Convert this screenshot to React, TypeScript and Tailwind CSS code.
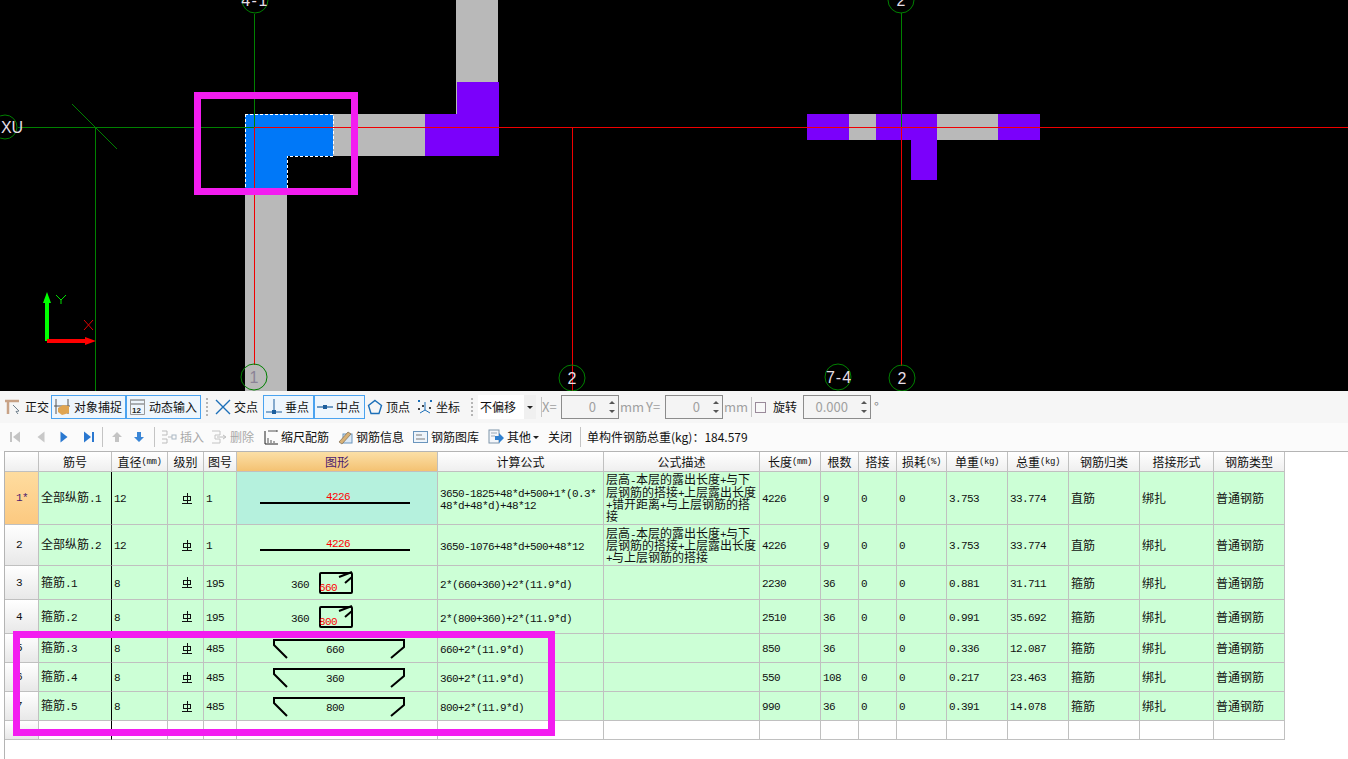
import React from 'react';

const FONT = "font-['Noto_Sans_CJK_SC','Liberation_Sans',sans-serif]";

// CJK runs stay at 12px, the latin runs use a narrow mono to get the 6px cell of the original font
const Mix = ({ text }: { text: string }) => (
  <>
    {text.split(/([\u4e00-\u9fa5]+)/).map((part, i) =>
      /[\u4e00-\u9fa5]/.test(part) ? (
        <span key={i}>{part}</span>
      ) : (
        <span key={i} className="font-['Liberation_Mono',monospace] text-[11px] tracking-[-0.6px]">
          {part}
        </span>
      )
    )}
  </>
);

const HeadUnit = ({ label, unit }: { label: string; unit: string }) => (
  <>
    {label}
    <span className="font-['Liberation_Mono',monospace] text-[9px] tracking-[-0.4px]">({unit})</span>
  </>
);

/* ---------- CAD canvas ---------- */

const Bubble = ({
  x,
  y,
  r = 13,
  label,
  dx = 0,
  fill = '#e6dfe6',
  spacing = 0,
}: {
  x: number;
  y: number;
  r?: number;
  label: string;
  dx?: number;
  fill?: string;
  spacing?: number;
}) => (
  <g>
    <circle cx={x} cy={y} r={r} fill="none" stroke="#008000" strokeWidth="1" />
    <text
      x={x + dx}
      y={y + 6}
      textAnchor="middle"
      fontSize="16"
      letterSpacing={spacing}
      fontFamily="Liberation Sans, sans-serif"
      fill={fill}
    >
      {label}
    </text>
  </g>
);

const Canvas = () => (
  <svg width="1348" height="391" viewBox="0 0 1348 391" className="block bg-black">
    {/* walls */}
    <g fill="#b9b9b9" shapeRendering="crispEdges">
      <rect x="245" y="190" width="42" height="201" />
      <rect x="333" y="114" width="92" height="42" />
      <rect x="456" y="0" width="42" height="114" />
      <rect x="849" y="114" width="27" height="26" />
      <rect x="937" y="114" width="61" height="26" />
    </g>
    <g fill="#7b00fb" shapeRendering="crispEdges">
      <rect x="425" y="114" width="74" height="42" />
      <rect x="457" y="82" width="42" height="32" />
      <rect x="807" y="114" width="42" height="26" />
      <rect x="876" y="114" width="61" height="26" />
      <rect x="911" y="140" width="26" height="40" />
      <rect x="998" y="114" width="42" height="26" />
    </g>
    {/* selected column */}
    <path
      d="M245 114H333V156H287V190H245Z"
      fill="#0078f8"
      stroke="#fff"
      strokeWidth="1"
      strokeDasharray="3 2"
      shapeRendering="crispEdges"
    />
    {/* axis lines */}
    <g strokeWidth="1" shapeRendering="crispEdges">
      <path d="M17.5 127.5H254" stroke="#008000" />
      <path d="M254 127.5H1348" stroke="#f00000" />
      <path d="M254.5 14V127" stroke="#008000" />
      <path d="M254.5 127V365" stroke="#f00000" />
      <path d="M95.5 127V391" stroke="#008000" />
      <path d="M572.5 127V391" stroke="#f00000" />
      <path d="M901.5 13V127" stroke="#008000" />
      <path d="M901.5 127V366" stroke="#f00000" />
    </g>
    <path d="M72 104L117 149" stroke="#008000" strokeWidth="1" />
    {/* grid bubbles */}
    <Bubble x={5} y={127} r={12} label="XU" dx={7} />
    <Bubble x={255} y={0} label="4-1" spacing={1.5} />
    <Bubble x={901} y={0} label="2" />
    <Bubble x={254} y={377} label="1" fill="#8a8296" />
    <Bubble x={572} y={378} label="2" />
    <Bubble x={838} y={377} label="7-4" dx={1} spacing={1} />
    <Bubble x={902} y={378} label="2" />
    {/* ucs */}
    <path d="M47 341V300" stroke="#00ff00" strokeWidth="4" />
    <path d="M47 292L51 303H43Z" fill="#00ff00" />
    <path d="M47 341H88" stroke="#ff0000" strokeWidth="4" />
    <path d="M96 341L85 337V345Z" fill="#ff0000" />
    <path d="M56 295L61 300L66 295M61 300V304" fill="none" stroke="#00e000" strokeWidth="1" />
    <path d="M84 320L93 330M93 320L84 330" fill="none" stroke="#e00000" strokeWidth="1" />
  </svg>
);

/* ---------- toolbar icons ---------- */

const Ico = ({ w = 16, h = 16, children }: { w?: number; h?: number; children: React.ReactNode }) => (
  <svg width={w} height={h} viewBox={`0 0 ${w} ${h}`} className="shrink-0" fill="none">
    {children}
  </svg>
);

const OrthoIcon = () => (
  <Ico w={17}>
    <path d="M0 2H14M3 2V15" stroke="#c8a286" strokeWidth="2.5" />
    <path d="M8 6L14 12L11 12.5L13 15" stroke="#6f7f8c" strokeWidth="1" />
  </Ico>
);
const SnapIcon = () => (
  <Ico w={17}>
    <path d="M2 0V15M14 0V15M0 7H16" stroke="#555" strokeWidth="1" />
    <path d="M4 9L9 6L15 7V14L8 16L4 13Z" fill="#dfa552" />
  </Ico>
);
const InputIcon = () => (
  <Ico w={17}>
    <path d="M1 1H16M1 5H16" stroke="#666" strokeWidth="1" />
    <path d="M1.5 1V15.5H15.5V1" stroke="#9a9a9a" strokeWidth="1" />
    <text x="3" y="14" fontSize="8" fontFamily="Liberation Sans, sans-serif" fontWeight="bold" fill="#222">
      12
    </text>
  </Ico>
);
const CrossIcon = () => (
  <Ico>
    <path d="M1 1L15 15M15 1L1 15" stroke="#1c6fb8" strokeWidth="1.4" />
  </Ico>
);
const PerpIcon = () => (
  <Ico>
    <path d="M8 0V13M0 13H16" stroke="#1c5f9e" strokeWidth="1" />
    <rect x="6" y="11" width="4" height="4" fill="#1c5f9e" />
  </Ico>
);
const MidIcon = () => (
  <Ico>
    <path d="M0 8H16" stroke="#1c5f9e" strokeWidth="1.2" />
    <rect x="6" y="6" width="4" height="4" fill="#1c5f9e" />
  </Ico>
);
const VertexIcon = () => (
  <Ico>
    <path d="M8 1.5L14.5 6.5L12 14.5H4L1.5 6.5Z" stroke="#1c6fb8" strokeWidth="1.4" />
  </Ico>
);
const CoordIcon = () => (
  <Ico>
    <path d="M8 3V11M3 14L8 11L13 14" stroke="#1c6fb8" strokeWidth="1" />
    <rect x="1" y="1" width="2" height="2" fill="#1c6fb8" />
    <rect x="13" y="1" width="2" height="2" fill="#1c6fb8" />
    <rect x="5" y="6" width="2" height="2" fill="#444" />
    <rect x="12" y="8" width="2" height="2" fill="#444" />
    <rect x="1" y="9" width="2" height="2" fill="#444" />
  </Ico>
);

const NavFirst = ({ color }: { color: string }) => (
  <Ico w={11} h={12}>
    <rect x="0" y="1" width="2" height="10" fill={color} />
    <path d="M10 0.5V11.5L3 6Z" fill={color} />
  </Ico>
);
const NavPrev = ({ color }: { color: string }) => (
  <Ico w={8} h={12}>
    <path d="M7.5 0.5V11.5L0.5 6Z" fill={color} />
  </Ico>
);
const NavNext = ({ color }: { color: string }) => (
  <Ico w={8} h={12}>
    <path d="M0.5 0.5V11.5L7.5 6Z" fill={color} />
  </Ico>
);
const NavLast = ({ color }: { color: string }) => (
  <Ico w={11} h={12}>
    <path d="M0 0.5V11.5L7 6Z" fill={color} />
    <rect x="8" y="1" width="2" height="10" fill={color} />
  </Ico>
);
const MoveUp = ({ color }: { color: string }) => (
  <Ico w={10} h={10}>
    <path d="M5 0L10 5H7V10H3V5H0Z" fill={color} />
  </Ico>
);
const MoveDown = ({ color }: { color: string }) => (
  <Ico w={10} h={10}>
    <path d="M3 0H7V5H10L5 10L0 5H3Z" fill={color} />
  </Ico>
);
const RowInsert = () => (
  <Ico>
    <path d="M1 2H6V6H1M1 10H6V14H1" stroke="#bdbdbd" strokeWidth="1" />
    <path d="M7 8H11" stroke="#bdbdbd" strokeWidth="1" />
    <rect x="11" y="6" width="4" height="4" stroke="#a9b7c4" strokeWidth="1" />
  </Ico>
);
const RowDelete = () => (
  <Ico>
    <path d="M1 2H9V6H4V10H9V14H1" stroke="#c4c4c4" strokeWidth="1" />
    <path d="M6 8H14M12 6L15 8L12 10" stroke="#bdbdbd" strokeWidth="1" />
  </Ico>
);
const ScaleIcon = () => (
  <Ico w={14}>
    <path d="M1 2V15H14" stroke="#222" strokeWidth="1" />
    <path d="M4 2H13M4 9V14M7 11V14M10 12V14M13 1V3" stroke="#555" strokeWidth="1" />
  </Ico>
);
const InfoIcon = () => (
  <Ico w={15}>
    <rect x="5" y="5" width="9" height="9" fill="#dbe9f6" stroke="#6a95bd" strokeWidth="1" />
    <path d="M1 13L10 3L13 5L4 15Z" fill="#d9b277" stroke="#7b6a50" strokeWidth="0.7" />
  </Ico>
);
const LibraryIcon = () => (
  <Ico w={15}>
    <rect x="0.5" y="2.5" width="14" height="11" fill="#eef4fa" stroke="#6a95bd" strokeWidth="1" />
    <path d="M3 6H9M3 10H12" stroke="#7a7a7a" strokeWidth="1.2" />
  </Ico>
);
const OtherIcon = () => (
  <Ico>
    <rect x="1" y="1" width="10" height="13" fill="#f3f6fa" stroke="#7f95aa" strokeWidth="1" />
    <path d="M3 4H9M3 7H7" stroke="#9aa8b5" strokeWidth="1" />
    <path d="M7 7H11V4L16 9L11 14V11H7Z" fill="#2f80d0" />
  </Ico>
);

/* ---------- toolbars ---------- */

const Tool = ({
  w,
  icon,
  label,
  active,
  muted,
}: {
  w: string;
  icon: React.ReactNode;
  label: string;
  active?: boolean;
  muted?: boolean;
}) => (
  <div
    className={`flex h-[24px] shrink-0 items-center gap-[3px] pl-[2px] ${w} ${
      active ? 'border border-[#4aa3f0] bg-[#eef6fd]' : ''
    } ${muted ? 'text-[#a8a8a8]' : 'text-[#111]'}`}
  >
    {icon}
    <span className="whitespace-nowrap">{label}</span>
  </div>
);

const Dots = ({ className }: { className: string }) => (
  <div className={`flex shrink-0 flex-col gap-[2px] ${className}`}>
    {[0, 1, 2, 3, 4].map((i) => (
      <span key={i} className="block h-[2px] w-[2px] bg-[#b5b5b5]" />
    ))}
  </div>
);

const Sep = ({ className }: { className: string }) => (
  <div className={`h-[20px] w-px shrink-0 bg-[#c4c4c4] ${className}`} />
);

const Spin = ({ value, w }: { value: string; w: string }) => (
  <div className={`flex h-[24px] shrink-0 items-center border border-[#8c8c8c] bg-[#f4f4f4] ${w}`}>
    <span className="flex-1 pr-[9px] text-right text-[13px] text-[#a0a0a0]">{value}</span>
    <div className="flex w-[13px] flex-col items-center gap-[6px]">
      <span className="h-0 w-0 border-x-[3px] border-b-[3px] border-x-transparent border-b-[#555]" />
      <span className="h-0 w-0 border-x-[3px] border-t-[3px] border-x-transparent border-t-[#555]" />
    </div>
  </div>
);

const SnapBar = () => (
  <div className="flex h-[32px] items-center bg-[#f6f6f6] pl-[3px] text-[12px]">
    <Tool w="w-[48px]" icon={<OrthoIcon />} label="正交" />
    <Tool w="w-[75px]" icon={<SnapIcon />} label="对象捕捉" active />
    <Tool w="w-[75px]" icon={<InputIcon />} label="动态输入" active />
    <Dots className="ml-[5px] mr-[5px]" />
    <Tool w="w-[50px]" icon={<CrossIcon />} label="交点" />
    <Tool w="w-[51px]" icon={<PerpIcon />} label="垂点" active />
    <Tool w="w-[51px]" icon={<MidIcon />} label="中点" active />
    <Tool w="w-[50px]" icon={<VertexIcon />} label="顶点" />
    <Tool w="w-[52px]" icon={<CoordIcon />} label="坐标" />
    <Dots className="ml-[4px] mr-[5px]" />
    <div className="flex h-[24px] w-[58px] shrink-0 items-center bg-white pl-[2px]">
      <span className="flex-1 text-[#111]">不偏移</span>
      <div className="flex h-full w-[12px] items-center justify-center bg-[#f0f0f0]">
        <span className="h-0 w-0 border-x-[3px] border-t-[3px] border-x-transparent border-t-[#222]" />
      </div>
    </div>
    <Sep className="ml-[5px]" />
    <span className="w-[19px] text-[13px] text-[#a0a0a0]">X=</span>
    <Spin value="0" w="w-[58px]" />
    <span className="ml-[1px] w-[26px] text-[13px] text-[#a0a0a0]">mm</span>
    <span className="w-[19px] text-[13px] text-[#a0a0a0]">Y=</span>
    <Spin value="0" w="w-[58px]" />
    <span className="ml-[1px] w-[27px] text-[13px] text-[#a0a0a0]">mm</span>
    <Sep className="mr-[3px]" />
    <div className="h-[11px] w-[11px] shrink-0 border border-[#9a8a9a] bg-[#f8f8f8]" />
    <span className="ml-[7px] w-[30px] text-[#111]">旋转</span>
    <Spin value="0.000" w="w-[68px]" />
    <span className="ml-[3px] text-[13px] text-[#888]">°</span>
  </div>
);

const EditBar = () => (
  <div className="flex h-[28px] items-center bg-[#fbfbfb] pl-[10px] text-[12px] text-[#111]">
    <NavFirst color="#c4c4c4" />
    <div className="ml-[16px]">
      <NavPrev color="#c8c8c8" />
    </div>
    <div className="ml-[15px]">
      <NavNext color="#2a78d0" />
    </div>
    <div className="ml-[16px]">
      <NavLast color="#2a78d0" />
    </div>
    <Sep className="ml-[7px] mr-[9px]" />
    <MoveUp color="#c4c4c4" />
    <div className="ml-[12px]">
      <MoveDown color="#3a86d6" />
    </div>
    <Sep className="ml-[10px] mr-[4px]" />
    <Tool w="w-[50px]" icon={<RowInsert />} label="插入" muted />
    <Tool w="w-[53px]" icon={<RowDelete />} label="删除" muted />
    <Tool w="w-[74px]" icon={<ScaleIcon />} label="缩尺配筋" />
    <Tool w="w-[75px]" icon={<InfoIcon />} label="钢筋信息" />
    <Tool w="w-[75px]" icon={<LibraryIcon />} label="钢筋图库" />
    <Tool w="w-[47px]" icon={<OtherIcon />} label="其他" />
    <span className="h-0 w-0 border-x-[3px] border-t-[3px] border-x-transparent border-t-[#222]" />
    <span className="ml-[9px]">关闭</span>
    <Sep className="ml-[8px] mr-[6px]" />
    <span className="whitespace-nowrap">单构件钢筋总重(kg)：184.579</span>
  </div>
);

/* ---------- bar shapes in the 图形 column ---------- */

const Straight = ({ h, y }: { h: number; y: number }) => (
  <svg width="200" height={h} className="block">
    <path d={`M23 ${y}H173`} stroke="#000" strokeWidth="2" />
    <text
      x="101"
      y={y - 3}
      textAnchor="middle"
      fontSize="11"
      letterSpacing="-0.6"
      fontFamily="Liberation Mono, monospace"
      fill="#f00"
    >
      4226
    </text>
  </svg>
);

const Stirrup = ({ side }: { side: string }) => (
  <svg width="200" height="33" className="block">
    <text x="54" y="22" fontSize="11" fontFamily="Liberation Mono, monospace" letterSpacing="-0.6" fill="#111">
      360
    </text>
    <rect x="83" y="7" width="32" height="20" rx="1" fill="none" stroke="#000" strokeWidth="2" />
    <path d="M102 11L115 6M108 17L115 11" stroke="#000" strokeWidth="2" />
    <text x="82" y="25" fontSize="11" fontFamily="Liberation Mono, monospace" letterSpacing="-0.6" fill="#f00">
      {side}
    </text>
  </svg>
);

const Hook = ({ label }: { label: string }) => (
  <svg width="200" height="28" className="block">
    <path d="M50 24L37 11V6H167V13L154 24" fill="none" stroke="#000" strokeWidth="2" />
    <text
      x="98"
      y="19"
      textAnchor="middle"
      fontSize="11"
      letterSpacing="-0.6"
      fontFamily="Liberation Mono, monospace"
      fill="#111"
    >
      {label}
    </text>
  </svg>
);

const GradeMark = () => (
  <svg width="10" height="11" viewBox="0 0 10 11" className="mx-auto block" fill="none">
    <path d="M5 0V10M1.5 3H8.5V7H1.5ZM0 10H10" stroke="#111" strokeWidth="1" shapeRendering="crispEdges" />
  </svg>
);

/* ---------- table ---------- */

const HEADS: React.ReactNode[] = [
  '',
  '筋号',
  <HeadUnit label="直径" unit="mm" />,
  '级别',
  '图号',
  '图形',
  '计算公式',
  '公式描述',
  <HeadUnit label="长度" unit="mm" />,
  '根数',
  '搭接',
  <HeadUnit label="损耗" unit="%" />,
  <HeadUnit label="单重" unit="kg" />,
  <HeadUnit label="总重" unit="kg" />,
  '钢筋归类',
  '搭接形式',
  '钢筋类型',
];

interface Row {
  no: string;
  name: string;
  dia: string;
  fig: string;
  shape: React.ReactNode;
  formula: string[];
  desc: string[];
  len: string;
  count: string;
  lap: string;
  loss: string;
  unit: string;
  total: string;
  kind: string;
}

const DESC_1 = ['层高-本层的露出长度+与下', '层钢筋的搭接+上层露出长度', '+错开距离+与上层钢筋的搭', '接'];
const DESC_2 = ['层高-本层的露出长度+与下', '层钢筋的搭接+上层露出长度', '+与上层钢筋的搭接'];

const ROWS: Row[] = [
  {
    no: '1*',
    name: '全部纵筋.1',
    dia: '12',
    fig: '1',
    shape: <Straight h={52} y={31} />,
    formula: ['3650-1825+48*d+500+1*(0.3*', '48*d+48*d)+48*12'],
    desc: DESC_1,
    len: '4226',
    count: '9',
    lap: '0',
    loss: '0',
    unit: '3.753',
    total: '33.774',
    kind: '直筋',
  },
  {
    no: '2',
    name: '全部纵筋.2',
    dia: '12',
    fig: '1',
    shape: <Straight h={40} y={25} />,
    formula: ['3650-1076+48*d+500+48*12'],
    desc: DESC_2,
    len: '4226',
    count: '9',
    lap: '0',
    loss: '0',
    unit: '3.753',
    total: '33.774',
    kind: '直筋',
  },
  {
    no: '3',
    name: '箍筋.1',
    dia: '8',
    fig: '195',
    shape: <Stirrup side="660" />,
    formula: ['2*(660+360)+2*(11.9*d)'],
    desc: [],
    len: '2230',
    count: '36',
    lap: '0',
    loss: '0',
    unit: '0.881',
    total: '31.711',
    kind: '箍筋',
  },
  {
    no: '4',
    name: '箍筋.2',
    dia: '8',
    fig: '195',
    shape: <Stirrup side="800" />,
    formula: ['2*(800+360)+2*(11.9*d)'],
    desc: [],
    len: '2510',
    count: '36',
    lap: '0',
    loss: '0',
    unit: '0.991',
    total: '35.692',
    kind: '箍筋',
  },
  {
    no: '5',
    name: '箍筋.3',
    dia: '8',
    fig: '485',
    shape: <Hook label="660" />,
    formula: ['660+2*(11.9*d)'],
    desc: [],
    len: '850',
    count: '36',
    lap: '',
    loss: '0',
    unit: '0.336',
    total: '12.087',
    kind: '箍筋',
  },
  {
    no: '6',
    name: '箍筋.4',
    dia: '8',
    fig: '485',
    shape: <Hook label="360" />,
    formula: ['360+2*(11.9*d)'],
    desc: [],
    len: '550',
    count: '108',
    lap: '0',
    loss: '0',
    unit: '0.217',
    total: '23.463',
    kind: '箍筋',
  },
  {
    no: '7',
    name: '箍筋.5',
    dia: '8',
    fig: '485',
    shape: <Hook label="800" />,
    formula: ['800+2*(11.9*d)'],
    desc: [],
    len: '990',
    count: '36',
    lap: '0',
    loss: '0',
    unit: '0.391',
    total: '14.078',
    kind: '箍筋',
  },
];

const Cell = ({ children, className = '' }: { children?: React.ReactNode; className?: string }) => (
  <div
    className={`flex items-center overflow-hidden whitespace-nowrap border-r border-b border-[#c0c0c0] pl-[2px] ${className}`}
  >
    {children ? <div className="w-full">{children}</div> : null}
  </div>
);

const Lines = ({ lines, h }: { lines: string[]; h: string }) => (
  <>
    {lines.map((line) => (
      <div key={line} className={`${h} leading-[12px]`}>
        <Mix text={line} />
      </div>
    ))}
  </>
);

const RebarTable = () => (
  <div className="grid w-[1280px] grid-cols-[34px_73px_56px_36px_33px_201px_166px_156px_61px_38px_38px_50px_61px_61px_71px_74px_71px] grid-rows-[20px_53px_41px_34px_34px_29px_29px_29px_19px] text-[12px] leading-[14px] text-[#111]">
    {HEADS.map((head, i) => (
      <div
        key={i}
        className={`flex items-center justify-center whitespace-nowrap border-r border-b border-[#c0c0c0] ${
          i === 5
            ? 'bg-gradient-to-b from-[#fbdfa6] to-[#f4c272] text-[#4b1a6e]'
            : 'bg-gradient-to-b from-white to-[#efefef]'
        }`}
      >
        {head}
      </div>
    ))}
    {ROWS.map((r, i) => (
      <React.Fragment key={r.no}>
        <div
          className={`flex items-center border-r border-b border-[#c0c0c0] pl-[11px] ${
            i === 0
              ? 'bg-gradient-to-b from-[#fedc9f] to-[#fcc980] text-[#4b1a6e]'
              : 'bg-gradient-to-b from-white to-[#e8e8e8]'
          }`}
        >
          <Mix text={r.no} />
        </div>
        <Cell className="border-r-black bg-[#ccffd6]">
          <Mix text={r.name} />
        </Cell>
        <Cell className="bg-[#ccffd6]">
          <Mix text={r.dia} />
        </Cell>
        <Cell className="bg-[#ccffd6]">
          <GradeMark />
        </Cell>
        <Cell className="bg-[#ccffd6]">
          <Mix text={r.fig} />
        </Cell>
        <Cell className={`!pl-0 ${i === 0 ? 'bg-[#b5f1dd]' : 'bg-[#ccffd6]'}`}>{r.shape}</Cell>
        <Cell className="bg-[#ccffd6]">
          <Lines lines={r.formula} h="h-[12px]" />
        </Cell>
        <Cell className="bg-[#ccffd6]">
          {r.desc.length > 0 ? <Lines lines={r.desc} h="h-[12.3px]" /> : null}
        </Cell>
        <Cell className="bg-[#ccffd6]">
          <Mix text={r.len} />
        </Cell>
        <Cell className="bg-[#ccffd6]">
          <Mix text={r.count} />
        </Cell>
        <Cell className="bg-[#ccffd6]">{r.lap ? <Mix text={r.lap} /> : null}</Cell>
        <Cell className="bg-[#ccffd6]">
          <Mix text={r.loss} />
        </Cell>
        <Cell className="bg-[#ccffd6]">
          <Mix text={r.unit} />
        </Cell>
        <Cell className="bg-[#ccffd6]">
          <Mix text={r.total} />
        </Cell>
        <Cell className="bg-[#ccffd6]">{r.kind}</Cell>
        <Cell className="bg-[#ccffd6]">绑扎</Cell>
        <Cell className="bg-[#ccffd6]">普通钢筋</Cell>
      </React.Fragment>
    ))}
    <div className="border-r border-b border-[#c0c0c0] bg-gradient-to-b from-white to-[#e8e8e8]" />
    <Cell className="border-r-black" />
    {HEADS.slice(2).map((_, i) => (
      <Cell key={i} />
    ))}
  </div>
);

const App = () => (
  <div className={`relative h-[759px] w-[1348px] overflow-hidden bg-white ${FONT}`}>
    <Canvas />
    <SnapBar />
    <EditBar />
    <div className="ml-[4px] h-[308px] border-t border-l border-[#b4b4b4]">
      <RebarTable />
    </div>
    {/* hand-drawn review marks lying over the shot */}
    <div className="absolute left-[194px] top-[92px] h-[103px] w-[164px] border-[7px] border-[#f31df0]" />
    <div className="absolute left-[13px] top-[631px] h-[105px] w-[542px] border-[7px] border-[#f31df0]" />
  </div>
);

export default App;
